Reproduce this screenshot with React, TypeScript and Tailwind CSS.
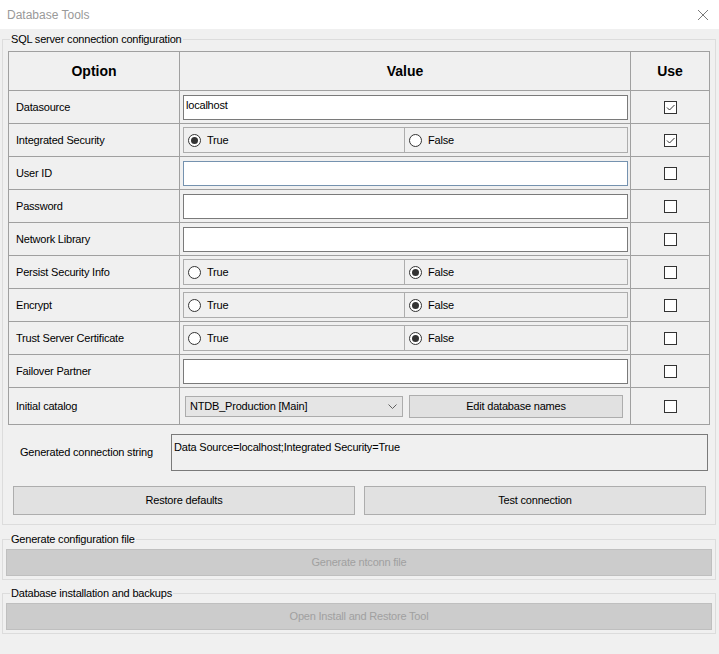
import type { ReactNode } from "react";

type RowKind =
  | { kind: "text"; focused?: boolean; value?: string }
  | { kind: "radio"; value: boolean }
  | { kind: "combo" };

type Row = { label: string; use: boolean } & RowKind;

const ROWS: Row[] = [
  { label: "Datasource", kind: "text", value: "localhost", use: true },
  { label: "Integrated Security", kind: "radio", value: true, use: true },
  { label: "User ID", kind: "text", focused: true, use: false },
  { label: "Password", kind: "text", use: false },
  { label: "Network Library", kind: "text", use: false },
  { label: "Persist Security Info", kind: "radio", value: false, use: false },
  { label: "Encrypt", kind: "radio", value: false, use: false },
  { label: "Trust Server Certificate", kind: "radio", value: false, use: false },
  { label: "Failover Partner", kind: "text", use: false },
  { label: "Initial catalog", kind: "combo", use: false },
];

function Radio({ checked, label }: { checked: boolean; label: string }) {
  return (
    <div className="flex items-center gap-[6px] pl-[4px]">
      <span className="flex h-[13px] w-[13px] items-center justify-center rounded-full border border-[#333333] bg-white">
        {checked && <span className="h-[7px] w-[7px] rounded-full bg-[#333333]" />}
      </span>
      <span>{label}</span>
    </div>
  );
}

function CheckBox({ checked }: { checked: boolean }) {
  return (
    <span className="flex h-[13px] w-[13px] items-center justify-center border border-[#333333] bg-white">
      {checked && (
        <svg width="11" height="11" viewBox="0 0 11 11">
          <path d="M2 5.5 L4.5 8 L9.5 3" fill="none" stroke="#333" strokeWidth="1" />
        </svg>
      )}
    </span>
  );
}

function ValueCell({ row }: { row: Row }) {
  if (row.kind === "text") {
    return (
      <div
        className={`flex h-[25px] w-[445px] items-start border bg-white pl-[2px] pt-[1px] ${
          row.focused ? "border-[#7592af]" : "border-[#7a7a7a]"
        }`}
      >
        {row.value}
      </div>
    );
  }
  if (row.kind === "radio") {
    return (
      <div className="flex h-[26px] w-[445px] border border-[#adadad]">
        <div className="flex w-[221px] items-center border-r border-[#adadad]">
          <Radio checked={row.value} label="True" />
        </div>
        <div className="flex flex-1 items-center">
          <Radio checked={!row.value} label="False" />
        </div>
      </div>
    );
  }
  return (
    <div className="flex items-center gap-[6px] pl-[2px]">
      <div className="flex h-[21px] w-[218px] items-center justify-between border border-[#acacac] bg-[#e5e5e5] pl-[4px] pr-[5px]">
        <span>NTDB_Production [Main]</span>
        <svg width="9" height="5" viewBox="0 0 9 5">
          <path d="M0.5 0.5 L4.5 4.5 L8.5 0.5" fill="none" stroke="#606060" strokeWidth="1" />
        </svg>
      </div>
      <button
        className="flex h-[23px] w-[214px] items-center justify-center border border-[#adadad] bg-[#e1e1e1]"
        type="button"
      >
        Edit database names
      </button>
    </div>
  );
}

function GroupBox({
  title,
  className,
  children,
}: {
  title: string;
  className: string;
  children: ReactNode;
}) {
  return (
    <fieldset className={`ml-[2px] mr-[3px] border border-[#dcdcdc] ${className}`}>
      <legend className="px-[1px] text-[11px] leading-[14px]">{title}</legend>
      {children}
    </fieldset>
  );
}

export default function App() {
  return (
    <div className="h-[654px] w-[719px] overflow-hidden bg-[#f0f0f0] font-['Liberation_Sans',Arial,sans-serif] text-[11px] tracking-[-0.2px] text-black">
      <div className="flex h-[29px] items-center justify-between bg-white pl-[7px] pr-[10px]">
        <span className="text-[12px] tracking-normal text-[#999999]">Database Tools</span>
        <svg width="12" height="12" viewBox="0 0 12 12">
          <path d="M1 1 L11 11 M11 1 L1 11" stroke="#7a7a7a" strokeWidth="1" />
        </svg>
      </div>

      <GroupBox
        title="SQL server connection configuration"
        className="mt-[3px] px-[5px] pb-[9px] [&>legend]:ml-[2px]"
      >
        <div className="mt-[5px] w-[702px] border border-[#a0a0a0]">
          <div className="flex h-[38px] items-center text-[14px] font-bold tracking-normal">
            <div className="w-[170px] text-center">Option</div>
            <div className="flex h-full w-[451px] items-center justify-center border-l border-[#a0a0a0]">
              Value
            </div>
            <div className="flex h-full w-[79px] items-center justify-center border-l border-[#a0a0a0]">
              Use
            </div>
          </div>
          {ROWS.map((row) => (
            <div
              key={row.label}
              className={`flex border-t border-[#a0a0a0] ${
                row.kind === "combo" ? "h-[37px]" : "h-[33px]"
              }`}
            >
              <div className="flex w-[170px] items-center pl-[7px]">{row.label}</div>
              <div className="flex w-[451px] items-center border-l border-[#a0a0a0] pl-[3px]">
                <ValueCell row={row} />
              </div>
              <div className="flex w-[79px] items-center justify-center border-l border-[#a0a0a0]">
                <CheckBox checked={row.use} />
              </div>
            </div>
          ))}
        </div>

        <div className="mt-[9px] flex items-center">
          <div className="ml-[12px] w-[151px]">Generated connection string</div>
          <div className="h-[37px] w-[537px] border border-[#7a7a7a] pl-[2px] pt-[4px]">
            Data Source=localhost;Integrated Security=True
          </div>
        </div>

        <div className="mt-[15px] flex gap-[9px] pl-[5px]">
          <button
            className="h-[29px] w-[342px] border border-[#adadad] bg-[#e1e1e1]"
            type="button"
          >
            Restore defaults
          </button>
          <button
            className="h-[29px] w-[342px] border border-[#adadad] bg-[#e1e1e1]"
            type="button"
          >
            Test connection
          </button>
        </div>
      </GroupBox>

      <GroupBox
        title="Generate configuration file"
        className="mt-[7px] px-[3px] pb-[3px] [&>legend]:ml-[4px]"
      >
        <button
          className="mt-[3px] h-[27px] w-full border border-[#bfbfbf] bg-[#cccccc] text-[#a0a0a0]"
          disabled
          type="button"
        >
          Generate ntconn file
        </button>
      </GroupBox>

      <GroupBox
        title="Database installation and backups"
        className="mt-[6px] px-[3px] pb-[3px] [&>legend]:ml-[4px]"
      >
        <button
          className="mt-[3px] h-[27px] w-full border border-[#bfbfbf] bg-[#cccccc] text-[#a0a0a0]"
          disabled
          type="button"
        >
          Open Install and Restore Tool
        </button>
      </GroupBox>
    </div>
  );
}
